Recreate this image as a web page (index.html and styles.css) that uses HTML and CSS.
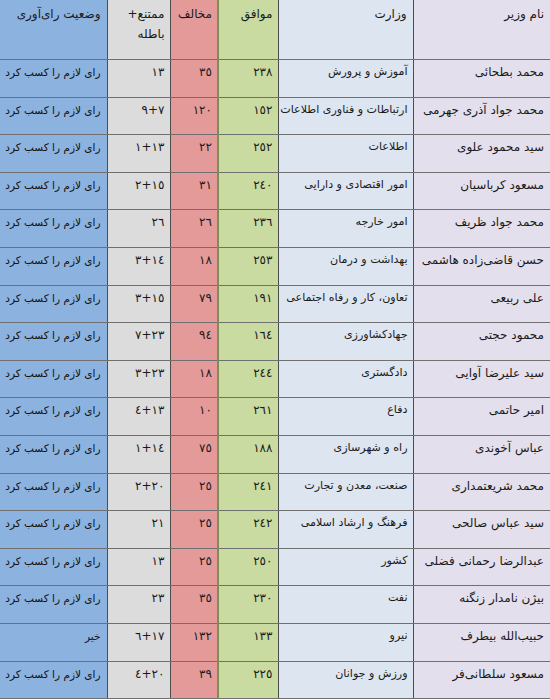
FILE: index.html
```html
<!DOCTYPE html>
<html lang="fa" dir="rtl">
<head>
<meta charset="utf-8">
<title>رای اعتماد وزرا</title>
<link rel="stylesheet" href="styles.css">
</head>
<body>
<table class="votes">
  <colgroup>
    <col class="c-name"><col class="c-min"><col class="c-yes"><col class="c-no"><col class="c-abs"><col class="c-res">
  </colgroup>
  <thead>
    <tr>
      <th class="name">نام وزیر</th>
      <th class="min">وزارت</th>
      <th class="yes">موافق</th>
      <th class="no">مخالف</th>
      <th class="abs">ممتنع+ باطله</th>
      <th class="res">وضعیت رای‌آوری</th>
    </tr>
  </thead>
  <tbody>
    <tr><td class="name">محمد بطحائی</td><td class="min">آموزش و پرورش</td><td class="yes"><bdo dir="ltr">٢٣٨</bdo></td><td class="no"><bdo dir="ltr">٣٥</bdo></td><td class="abs"><bdo dir="ltr">١٣</bdo></td><td class="res">رای لازم را کسب کرد</td></tr>
    <tr><td class="name">محمد جواد آذری جهرمی</td><td class="min">ارتباطات و فناوری اطلاعات</td><td class="yes"><bdo dir="ltr">١٥٢</bdo></td><td class="no"><bdo dir="ltr">١٢٠</bdo></td><td class="abs"><bdo dir="ltr">٩+٧</bdo></td><td class="res">رای لازم را کسب کرد</td></tr>
    <tr><td class="name">سید محمود علوی</td><td class="min">اطلاعات</td><td class="yes"><bdo dir="ltr">٢٥٢</bdo></td><td class="no"><bdo dir="ltr">٢٢</bdo></td><td class="abs"><bdo dir="ltr">١+١٣</bdo></td><td class="res">رای لازم را کسب کرد</td></tr>
    <tr><td class="name">مسعود کرباسیان</td><td class="min">امور اقتصادی و دارایی</td><td class="yes"><bdo dir="ltr">٢٤٠</bdo></td><td class="no"><bdo dir="ltr">٣١</bdo></td><td class="abs"><bdo dir="ltr">٢+١٥</bdo></td><td class="res">رای لازم را کسب کرد</td></tr>
    <tr><td class="name">محمد جواد ظریف</td><td class="min">امور خارجه</td><td class="yes"><bdo dir="ltr">٢٣٦</bdo></td><td class="no"><bdo dir="ltr">٢٦</bdo></td><td class="abs"><bdo dir="ltr">٢٦</bdo></td><td class="res">رای لازم را کسب کرد</td></tr>
    <tr><td class="name">حسن قاضی‌زاده هاشمی</td><td class="min">بهداشت و درمان</td><td class="yes"><bdo dir="ltr">٢٥٣</bdo></td><td class="no"><bdo dir="ltr">١٨</bdo></td><td class="abs"><bdo dir="ltr">٣+١٤</bdo></td><td class="res">رای لازم را کسب کرد</td></tr>
    <tr><td class="name">علی ربیعی</td><td class="min">تعاون، کار و رفاه اجتماعی</td><td class="yes"><bdo dir="ltr">١٩١</bdo></td><td class="no"><bdo dir="ltr">٧٩</bdo></td><td class="abs"><bdo dir="ltr">٣+١٥</bdo></td><td class="res">رای لازم را کسب کرد</td></tr>
    <tr><td class="name">محمود حجتی</td><td class="min">جهادکشاورزی</td><td class="yes"><bdo dir="ltr">١٦٤</bdo></td><td class="no"><bdo dir="ltr">٩٤</bdo></td><td class="abs"><bdo dir="ltr">٧+٢٣</bdo></td><td class="res">رای لازم را کسب کرد</td></tr>
    <tr><td class="name">سید علیرضا آوایی</td><td class="min">دادگستری</td><td class="yes"><bdo dir="ltr">٢٤٤</bdo></td><td class="no"><bdo dir="ltr">١٨</bdo></td><td class="abs"><bdo dir="ltr">٣+٢٣</bdo></td><td class="res">رای لازم را کسب کرد</td></tr>
    <tr><td class="name">امیر حاتمی</td><td class="min">دفاع</td><td class="yes"><bdo dir="ltr">٢٦١</bdo></td><td class="no"><bdo dir="ltr">١٠</bdo></td><td class="abs"><bdo dir="ltr">٤+١٣</bdo></td><td class="res">رای لازم را کسب کرد</td></tr>
    <tr><td class="name">عباس آخوندی</td><td class="min">راه و شهرسازی</td><td class="yes"><bdo dir="ltr">١٨٨</bdo></td><td class="no"><bdo dir="ltr">٧٥</bdo></td><td class="abs"><bdo dir="ltr">١+١٤</bdo></td><td class="res">رای لازم را کسب کرد</td></tr>
    <tr><td class="name">محمد شریعتمداری</td><td class="min">صنعت، معدن و تجارت</td><td class="yes"><bdo dir="ltr">٢٤١</bdo></td><td class="no"><bdo dir="ltr">٢٥</bdo></td><td class="abs"><bdo dir="ltr">٢+٢٠</bdo></td><td class="res">رای لازم را کسب کرد</td></tr>
    <tr><td class="name">سید عباس صالحی</td><td class="min">فرهنگ و ارشاد اسلامی</td><td class="yes"><bdo dir="ltr">٢٤٢</bdo></td><td class="no"><bdo dir="ltr">٢٥</bdo></td><td class="abs"><bdo dir="ltr">٢١</bdo></td><td class="res">رای لازم را کسب کرد</td></tr>
    <tr><td class="name">عبدالرضا رحمانی فضلی</td><td class="min">کشور</td><td class="yes"><bdo dir="ltr">٢٥٠</bdo></td><td class="no"><bdo dir="ltr">٢٥</bdo></td><td class="abs"><bdo dir="ltr">١٣</bdo></td><td class="res">رای لازم را کسب کرد</td></tr>
    <tr><td class="name">بیژن نامدار زنگنه</td><td class="min">نفت</td><td class="yes"><bdo dir="ltr">٢٣٠</bdo></td><td class="no"><bdo dir="ltr">٣٥</bdo></td><td class="abs"><bdo dir="ltr">٢٣</bdo></td><td class="res">رای لازم را کسب کرد</td></tr>
    <tr><td class="name">حبیب‌الله بیطرف</td><td class="min">نیرو</td><td class="yes"><bdo dir="ltr">١٣٣</bdo></td><td class="no"><bdo dir="ltr">١٣٢</bdo></td><td class="abs"><bdo dir="ltr">٦+١٧</bdo></td><td class="res">خیر</td></tr>
    <tr><td class="name">مسعود سلطانی‌فر</td><td class="min">ورزش و جوانان</td><td class="yes"><bdo dir="ltr">٢٢٥</bdo></td><td class="no"><bdo dir="ltr">٣٩</bdo></td><td class="abs"><bdo dir="ltr">٤+٢٠</bdo></td><td class="res">رای لازم را کسب کرد</td></tr>
  </tbody>
</table>
</body>
</html>
```

FILE: styles.css
```css
html, body {
  margin: 0;
  padding: 0;
  background: #ffffff;
}

body {
  font-family: "DejaVu Sans", Tahoma, sans-serif;
  font-size: 12px;
  color: #1a1a1a;
}

.votes {
  width: 550px;
  border-collapse: collapse;
  table-layout: fixed;
  direction: rtl;
}

.c-name { width: 137px; }
.c-min  { width: 135px; }
.c-yes  { width: 60px; }
.c-no   { width: 48px; }
.c-abs  { width: 63px; }
.c-res  { width: 107px; }

.votes th,
.votes td {
  vertical-align: top;
  text-align: right;
  font-weight: normal;
  line-height: 20px;
  padding: 2px 6px 0 2px;
  border-left: 1px solid #4d4d4d;
  border-bottom: 1px solid #707070;
  white-space: nowrap;
  overflow: hidden;
}

.votes thead th {
  height: 55px;
  padding-top: 4px;
  white-space: normal;
}

.votes tbody td {
  height: 34.6px;
}

.votes .res { border-left: none; }
.votes .yes { border-left: 2px solid #7d8c52; }

.votes td.min { font-size: 11.1px; padding-right: 5px; padding-left: 0; }
.votes td.res { font-size: 10.5px; padding-right: 6px; color: #111; }
.votes .yes, .votes .no, .votes .abs { padding-right: 5px; }

.name { background: #e4dfec; }
.min  { background: #dde5f0; }
.yes  { background: #c9dba0; }
.no   { background: #e59a9a; }
.abs  { background: #dcdcdc; }
.res  { background: #8cb3e0; }
```
